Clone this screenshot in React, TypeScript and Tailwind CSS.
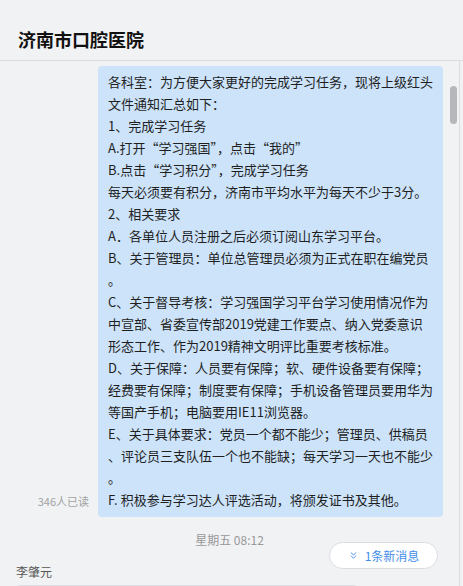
import { ChevronsDown } from "lucide-react";

const lines = [
  "各科室：为方便大家更好的完成学习任务，现将上级红头",
  "文件通知汇总如下：",
  "1、完成学习任务",
  "A.打开“学习强国”，点击“我的”",
  "B.点击“学习积分”，完成学习任务",
  "每天必须要有积分，济南市平均水平为每天不少于3分。",
  "2、相关要求",
  "A．各单位人员注册之后必须订阅山东学习平台。",
  "B、关于管理员：单位总管理员必须为正式在职在编党员",
  "。",
  "C、关于督导考核：学习强国学习平台学习使用情况作为",
  "中宣部、省委宣传部2019党建工作要点、纳入党委意识",
  "形态工作、作为2019精神文明评比重要考核标准。",
  "D、关于保障：人员要有保障；软、硬件设备要有保障；",
  "经费要有保障；制度要有保障；手机设备管理员要用华为",
  "等国产手机；电脑要用IE11浏览器。",
  "E、关于具体要求：党员一个都不能少；管理员、供稿员",
  "、评论员三支队伍一个也不能缺；每天学习一天也不能少",
  "。",
  "F. 积极参与学习达人评选活动，将颁发证书及其他。",
];

export default function App() {
  return (
    <div className="relative h-[586px] overflow-hidden bg-[#f1f2f4] font-['Noto_Sans_CJK_SC','Liberation_Sans',sans-serif]">
      <header className="h-[61px] border-b border-[#dcdde0] pl-[18px] pt-[26px]">
        <h1 className="text-[18px] font-bold leading-[27px] text-[#111]">济南市口腔医院</h1>
      </header>

      <div className="flex">
        <main className="relative w-[459px]">
          <div className="flex items-end justify-end pr-[16px] pt-[5px]">
            <span className="mb-[8px] mr-[9px] text-[11px] leading-[16px] text-[#a3a3a3]">346人已读</span>
            <div className="w-[345px] rounded-[4px] bg-[#cce3fa] pb-[6px] pl-[10px] pt-[5px] text-[13px] leading-[22px] text-[#1f1f1f]">
              {lines.map((line, i) => (
                <div key={i} className="whitespace-nowrap">
                  {line}
                </div>
              ))}
            </div>
          </div>

          <div className="mt-[14px] text-center text-[12px] leading-[18px] text-[#999]">星期五 08:12</div>

          <div className="mt-[14px] pl-[16px] text-[12px] leading-[18px] text-[#555]">李肇元</div>
          <div className="ml-[16px] mt-[4px] h-[40px] w-[342px] rounded-[4px] border border-[#dcdde0] bg-white" />

          <button className="absolute right-[21px] top-[481px] flex h-[27px] w-[109px] items-center justify-center gap-[6px] rounded-full border border-[#dadde2] bg-white text-[12px] text-[#3f8ee8]">
            <ChevronsDown className="h-[11px] w-[11px]" strokeWidth={2} />
            1条新消息
          </button>
        </main>
        <div className="h-[530px] w-px bg-[#dcdde0]" />
      </div>

      <div className="absolute left-[450px] top-[86px] h-[38px] w-[7px] rounded-full bg-[#b6b7ba]" />
    </div>
  );
}
